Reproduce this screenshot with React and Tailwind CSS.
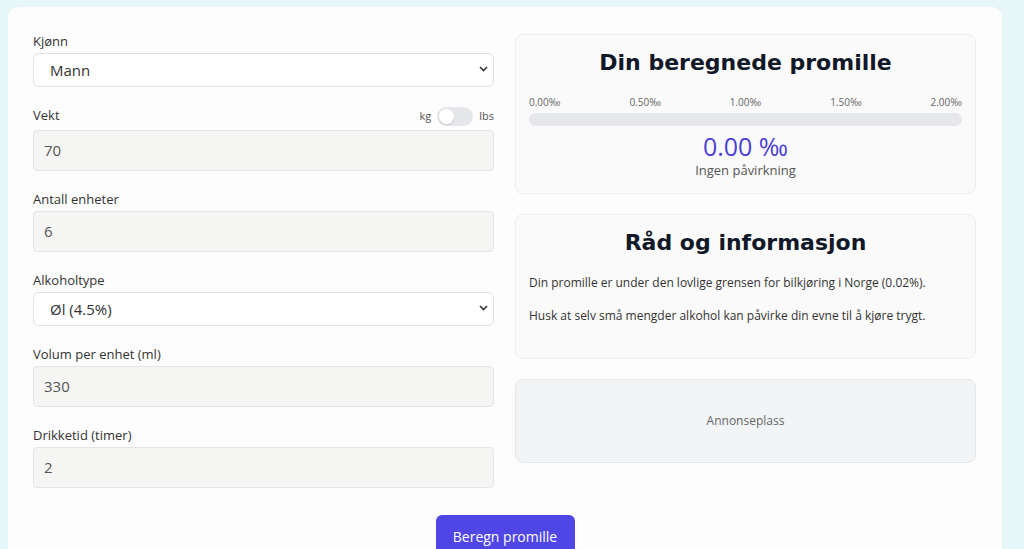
const inputCls =
  "h-[41px] w-full rounded-[4px] border border-[#e2e5e8] bg-[#f5f5f4] px-[10px] text-[15px] text-[#555]";
const selectCls =
  "h-[34px] w-full rounded-[6px] border border-[#dde1e5] bg-white pl-4 pr-3 text-[15px] text-[#333] appearance-none";
const headFont = { fontFamily: '"DejaVu Sans", sans-serif' };

function Label({ children }) {
  return <div className="mb-[3px] h-[18px] text-[13px] leading-[18px] text-[#333]">{children}</div>;
}

function Chevron() {
  return (
    <svg className="pointer-events-none absolute right-[6px] top-[13px]" width="9" height="6" viewBox="0 0 9 6">
      <path d="M1 1l3.5 3.5L8 1" fill="none" stroke="#333" strokeWidth="1.6" />
    </svg>
  );
}

function SelectField({ label, value }) {
  return (
    <div>
      <Label>{label}</Label>
      <div className="relative">
        <div className={selectCls + " flex items-center"}>{value}</div>
        <Chevron />
      </div>
    </div>
  );
}

function InputField({ label, value }) {
  return (
    <div>
      <Label>{label}</Label>
      <div className={inputCls + " flex items-center"}>{value}</div>
    </div>
  );
}

export default function App() {
  const ticks = ["0.00‰", "0.50‰", "1.00‰", "1.50‰", "2.00‰"];
  return (
    <div className="h-[549px] overflow-hidden bg-[#e7f7f8] pl-[8px] pr-[22px] pt-[7px]" style={{ fontFamily: '"Open Sans", sans-serif' }}>
      <div className="h-[600px] rounded-[10px] bg-[#fdfdfd] px-[25px] pt-[25px]">
        <div className="grid grid-cols-[461px_461px] gap-x-[21px]">
          <div className="flex flex-col gap-[19px]">
            <SelectField label="Kjønn" value="Mann" />
            <div>
              <div className="mb-[4px] flex h-[20px] items-center justify-between text-[13px] text-[#333]">
                <span>Vekt</span>
                <div className="flex items-center gap-[6px] text-[11px] text-[#555]">
                  <span>kg</span>
                  <div className="flex h-[19px] w-[36px] items-center rounded-full bg-[#e5e7eb] px-[2px]">
                    <div className="h-[15px] w-[15px] rounded-full bg-white shadow-sm" />
                  </div>
                  <span>lbs</span>
                </div>
              </div>
              <div className={inputCls + " flex items-center"}>70</div>
            </div>
            <InputField label="Antall enheter" value="6" />
            <SelectField label="Alkoholtype" value="Øl (4.5%)" />
            <InputField label="Volum per enhet (ml)" value="330" />
            <InputField label="Drikketid (timer)" value="2" />
          </div>
          <div className="flex flex-col gap-[20px] pt-[2px]">
            <div className="h-[160px] rounded-[8px] border border-[#eceef0] bg-[#fafafa] px-[13px] pt-[12px]">
              <h2 className="text-center text-[22px] font-bold leading-[32px] text-[#111827]" style={headFont}>
                Din beregnede promille
              </h2>
              <div className="mt-[16px] flex justify-between text-[10px] text-[#666]">
                {ticks.map((t) => (
                  <span key={t}>{t}</span>
                ))}
              </div>
              <div className="mt-[3px] h-[13px] rounded-full bg-[#e5e7eb]" />
              <div className="mt-[5px] text-center text-[25px] leading-[30px] text-[#4b3fd6]">0.00 ‰</div>
              <div className="text-center text-[13px] text-[#555]">Ingen påvirkning</div>
            </div>
            <div className="h-[145px] rounded-[8px] border border-[#eceef0] bg-[#fafafa] px-[13px] pt-[12px]">
              <h2 className="text-center text-[22px] font-bold leading-[32px] text-[#111827]" style={headFont}>
                Råd og informasjon
              </h2>
              <p className="mt-[15px] text-[12px] text-[#333]">
                Din promille er under den lovlige grensen for bilkjøring i Norge (0.02%).
              </p>
              <p className="mt-[15px] text-[12px] text-[#333]">
                Husk at selv små mengder alkohol kan påvirke din evne til å kjøre trygt.
              </p>
            </div>
            <div className="flex h-[84px] items-center justify-center rounded-[8px] border border-[#e5e7eb] bg-[#f3f4f6] text-[12px] text-[#666]">
              Annonseplass
            </div>
          </div>
        </div>
        <div className="mt-[27px] flex justify-center">
          <button className="h-[42px] w-[139px] rounded-[6px] bg-[#4f46e5] text-[14px] text-white">Beregn promille</button>
        </div>
      </div>
    </div>
  );
}
